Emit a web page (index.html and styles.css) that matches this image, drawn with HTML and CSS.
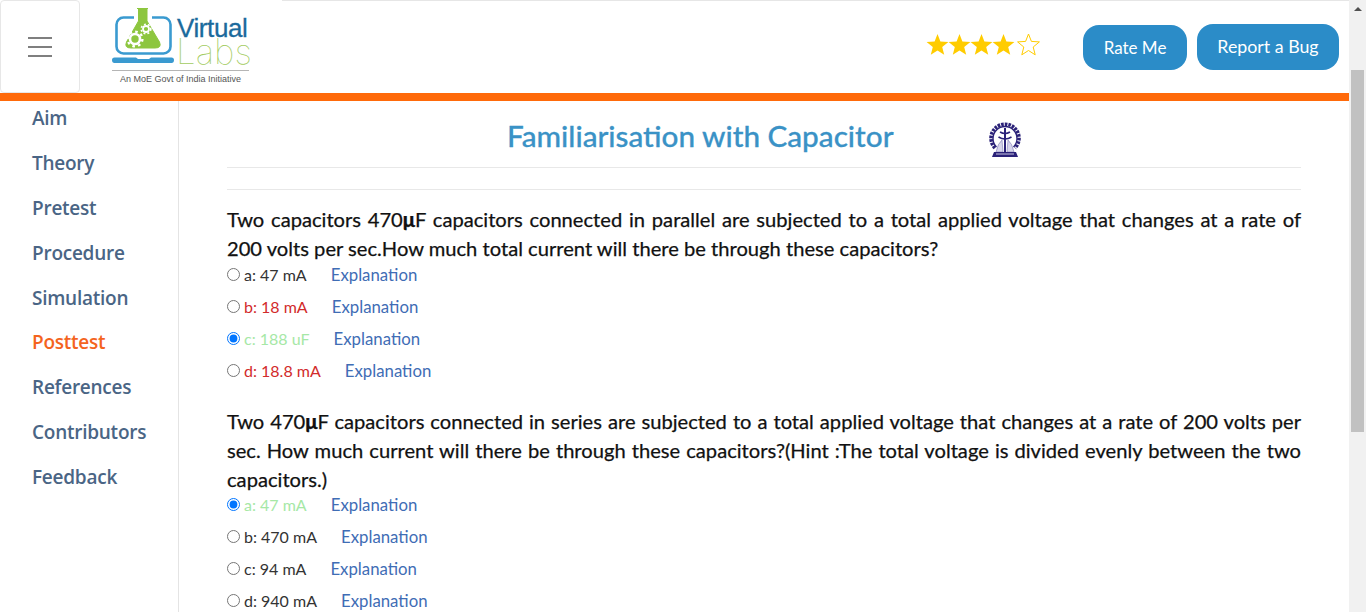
FILE: index.html
```html
<!DOCTYPE html>
<html lang="en">
<head>
  <meta charset="UTF-8">
  <meta name="viewport" content="width=device-width, initial-scale=1.0">
  <title>Familiarisation with Capacitor</title>
  <link rel="stylesheet" href="styles.css">
</head>
<body>
  <div class="page">
    <header class="topbar">
      <button class="menu-btn" aria-label="Menu">
        <span></span><span></span><span></span>
      </button>
      <a class="logo" href="#">
        <div class="logo-top">
          <svg class="logo-icon" width="62" height="55" viewBox="0 0 62 55">
            <rect x="4.5" y="9.5" width="54" height="36" rx="7" fill="none" stroke="#3a9ad0" stroke-width="2.6"/>
            <path d="M2.5 49.5 H24 L26 51 H37 L39 49.5 H59.5 Q62 49.5 62 52 Q62 55 59.5 55 H2.5 Q0 55 0 52 Q0 49.5 2.5 49.5 Z" fill="#3a9ad0"/>
            <path d="M22 0 H40 V14 L53 40 V44 H10 V40 L22 14 Z" fill="#fff"/>
            <path d="M25 0.5 H36 M26.5 1 V13 L14.5 34 Q12 40 19 40 H43 Q50 40 47.5 34 L35 13 V1 Z" fill="#8dc63f" stroke="#8dc63f" stroke-width="1"/>
            <circle cx="23" cy="31" r="5" fill="none" stroke="#fff" stroke-width="2.6"/>
            <circle cx="23" cy="31" r="7.4" fill="none" stroke="#fff" stroke-width="2.4" stroke-dasharray="2.6 3.2"/>
            <circle cx="34" cy="21" r="3" fill="none" stroke="#fff" stroke-width="1.8"/>
            <circle cx="34" cy="21" r="4.8" fill="none" stroke="#fff" stroke-width="1.6" stroke-dasharray="1.9 2.1"/>
          </svg>
          <div class="logo-words">
            <span class="logo-virtual">Virtual</span>
            <span class="logo-labs">Labs</span>
          </div>
        </div>
        <div class="logo-tag">An MoE Govt of India Initiative</div>
      </a>
      <div class="rating">
        <svg width="114" height="24" viewBox="0 0 114 24">
          <defs>
            <path id="star" d="M11.5 1 L14.4 8.4 L22.4 8.9 L16.2 14 L18.2 21.8 L11.5 17.5 L4.8 21.8 L6.8 14 L0.6 8.9 L8.6 8.4 Z"/>
          </defs>
          <use href="#star" x="0" fill="#ffcc00"/>
          <use href="#star" x="22" fill="#ffcc00"/>
          <use href="#star" x="44" fill="#ffcc00"/>
          <use href="#star" x="66" fill="#ffcc00"/>
          <use href="#star" x="91" fill="#fff" stroke="#ffcc00" stroke-width="1"/>
        </svg>
      </div>
      <div class="top-actions">
        <button class="pill pill-rate">Rate Me</button>
        <button class="pill pill-bug">Report a Bug</button>
      </div>
    </header>
    <div class="accent"></div>

    <div class="layout">
      <nav class="sidebar">
        <a href="#">Aim</a>
        <a href="#">Theory</a>
        <a href="#">Pretest</a>
        <a href="#">Procedure</a>
        <a href="#">Simulation</a>
        <a href="#" class="active">Posttest</a>
        <a href="#">References</a>
        <a href="#">Contributors</a>
        <a href="#">Feedback</a>
      </nav>

      <main class="content">
        <div class="title-row">
          <h1>Familiarisation with Capacitor</h1>
          <svg class="emblem" width="34" height="37" viewBox="0 0 34 37">
            <path d="M7 27 A14 14 0 1 1 27 27" fill="none" stroke="#2a2178" stroke-width="3.6" stroke-dasharray="2.6 1"/>
            <path d="M8.5 26 A12 12 0 1 1 25.500 26" fill="none" stroke="#2a2178" stroke-width="1.4"/>
            <path d="M8 31 Q10 22 14 19 L15 31 Z M26 31 Q24 22 20 19 L19 31 Z" fill="#d6d4ea" stroke="#7d78b5" stroke-width="0.6"/>
            <path d="M17 7 V31" stroke="#2a2178" stroke-width="2"/>
            <path d="M12 11 Q17 14 22 11 M10.500 16 Q17 20 23.500 16" fill="none" stroke="#2a2178" stroke-width="1.6"/>
            <path d="M6 31 H28 L30 36 H4 Z" fill="#2a2178"/>
            <path d="M8 33 H26" stroke="#c9c7e2" stroke-width="1"/>
          </svg>
        </div>
        <hr class="rule">

        <section class="question">
          <p class="q-text">Two capacitors 470<b>μ</b>F capacitors connected in parallel are subjected to a total applied voltage that changes at a rate of 200 volts per sec.How much total current will there be through these capacitors?</p>
          <div class="option"><input type="radio"><label>a: 47 mA</label><a href="#">Explanation</a></div>
          <div class="option wrong"><input type="radio"><label>b: 18 mA</label><a href="#">Explanation</a></div>
          <div class="option right"><input type="radio" checked><label>c: 188 uF</label><a href="#">Explanation</a></div>
          <div class="option wrong"><input type="radio"><label>d: 18.8 mA</label><a href="#">Explanation</a></div>
        </section>

        <section class="question question-long">
          <p class="q-text">Two 470<b>μ</b>F capacitors connected in series are subjected to a total applied voltage that changes at a rate of 200 volts per sec. How much current will there be through these capacitors?(Hint :The total voltage is divided evenly between the two capacitors.)</p>
          <div class="option right"><input type="radio" checked><label>a: 47 mA</label><a href="#">Explanation</a></div>
          <div class="option"><input type="radio"><label>b: 470 mA</label><a href="#">Explanation</a></div>
          <div class="option"><input type="radio"><label>c: 94 mA</label><a href="#">Explanation</a></div>
          <div class="option"><input type="radio"><label>d: 940 mA</label><a href="#">Explanation</a></div>
        </section>
      </main>
    </div>
  </div>

  <!-- Page scrollbar -->
  <div class="scrollbar">
    <div class="arrow"></div>
    <div class="thumb"></div>
  </div>
</body>
</html>
```

FILE: styles.css
```css
* {
  box-sizing: border-box;
}

html,
body {
  margin: 0;
  height: 100%;
  overflow: hidden;
}

body {
  display: flex;
  font-family: "Lato", "Open Sans", sans-serif;
  background-color: #fff;
  color: #111;
}

a {
  text-decoration: none;
}

.page {
  flex: 1;
  min-width: 0;
  display: flex;
  flex-direction: column;
  height: 612px;
}

/* Header */
.topbar {
  height: 93px;
  flex-shrink: 0;
  display: flex;
  align-items: flex-start;
  background: linear-gradient(#e6e6e6, #e6e6e6) 282px 0 / 100% 1px no-repeat;
}

.menu-btn {
  width: 80px;
  height: 93px;
  margin: 0;
  padding: 0;
  display: flex;
  flex-direction: column;
  align-items: center;
  justify-content: center;
  gap: 7px;
  background-color: #fff;
  border: 1px solid #e7e7e7;
  border-radius: 4px;
}

.menu-btn span {
  display: block;
  width: 24px;
  height: 2px;
  background-color: #7f7f7f;
}

.logo {
  width: 137px;
  margin-left: 32px;
  padding-top: 8px;
  display: block;
}

.logo-top {
  display: flex;
  height: 59px;
}

.logo-icon {
  flex-shrink: 0;
}

.logo-words {
  display: flex;
  flex-direction: column;
  margin-left: 3px;
}

.logo-virtual {
  margin-top: 7px;
  font-family: "Liberation Sans", sans-serif;
  font-size: 26px;
  letter-spacing: -0.4px;
  line-height: 26px;
  color: #1b6a9c;
  -webkit-text-stroke: 0.3px #1b6a9c;
}

.logo-labs {
  margin-top: -3px;
  margin-left: -1px;
  font-family: "Inter", sans-serif;
  font-weight: 100;
  font-size: 35px;
  line-height: 26px;
  color: #a3cc5f;
}

.logo-tag {
  margin-top: 3px;
  padding-top: 3px;
  border-top: 1px solid #b5b5b5;
  font-family: "Liberation Sans", sans-serif;
  font-size: 9px;
  line-height: 11px;
  color: #555;
  text-align: center;
  white-space: nowrap;
}

.rating {
  margin-left: 677px;
  margin-top: 33px;
  height: 24px;
}

.rating svg {
  display: block;
}

.top-actions {
  display: flex;
  align-items: flex-end;
  gap: 10px;
  margin-left: 43px;
  margin-top: 24px;
}

.pill {
  height: 46px;
  padding: 0;
  border: none;
  border-radius: 16px;
  background-color: #2b8cc8;
  color: #fff;
  font-family: "Lato", sans-serif;
  font-size: 17px;
}

.pill-rate {
  width: 104px;
  height: 45px;
}

.pill-bug {
  width: 142px;
  padding-bottom: 2px;
  font-size: 17.8px;
}

.accent {
  height: 8px;
  flex-shrink: 0;
  background-color: #ff6a0a;
}

/* Body */
.layout {
  flex: 1;
  min-height: 0;
  display: flex;
}

.sidebar {
  width: 179px;
  flex-shrink: 0;
  padding-top: 3px;
  display: flex;
  flex-direction: column;
  gap: 16.9px;
  border-right: 1px solid #e4e4e4;
}

.sidebar a {
  padding-left: 32px;
  font-family: "Open Sans", sans-serif;
  font-weight: 600;
  font-size: 19px;
  letter-spacing: -0.25px;
  line-height: 28px;
  color: #4a6585;
}

.sidebar a.active {
  color: #f4641e;
}

.content {
  flex: 1;
  min-width: 0;
  padding: 0 48px;
}

.title-row {
  height: 67px;
  display: flex;
  align-items: flex-start;
  border-bottom: 1px solid #e8e8e8;
}

h1 {
  margin: 15px 0 0 280px;
  font-size: 29.700px;
  font-weight: 500;
  line-height: 40px;
  color: #3a92c6;
  white-space: nowrap;
  -webkit-text-stroke: 0.3px #3a92c6;
}

.emblem {
  margin: 20px 0 0 94px;
  flex-shrink: 0;
}

.rule {
  margin: 21px 0 0;
  border: none;
  border-top: 1px solid #e8e8e8;
}

.question {
  margin-top: 15px;
}

.question + .question {
  margin-top: 20px;
}

.q-text {
  margin: 0;
  font-size: 20.150px;
  line-height: 29px;
  text-align: justify;
  color: #111;
  -webkit-text-stroke: 0.25px #111;
}

.q-text b {
  font-weight: 900;
}

.question-long .q-text {
  margin-bottom: -1px;
}

.option {
  height: 32px;
  display: flex;
  align-items: center;
  font-size: 16.800px;
  line-height: 32px;
  color: #333;
}

.option input {
  width: 13px;
  height: 13px;
  margin: 0 4px 0 0;
  flex-shrink: 0;
  position: relative;
  top: -1px;
}

.option label {
  margin-right: 24px;
  font-size: 16px;
}

.option a {
  color: #3f6db5;
}

.option.wrong label {
  color: #d22b2b;
}

.option.right label {
  color: #a6e8a6;
}

.question .q-text + .option {
  height: 24px;
  line-height: 24px;
  margin-bottom: 4px;
}

/* Scrollbar */
.scrollbar {
  width: 17px;
  height: 612px;
  flex-shrink: 0;
  background-color: #f1f1f1;
  position: relative;
}

.arrow {
  position: absolute;
  top: 7px;
  left: 5px;
  width: 0;
  height: 0;
  border-left: 4px solid transparent;
  border-right: 4px solid transparent;
  border-bottom: 4px solid #505050;
}

.thumb {
  position: absolute;
  top: 70px;
  left: 2px;
  width: 13px;
  height: 362px;
  background-color: #c1c1c1;
}
```
